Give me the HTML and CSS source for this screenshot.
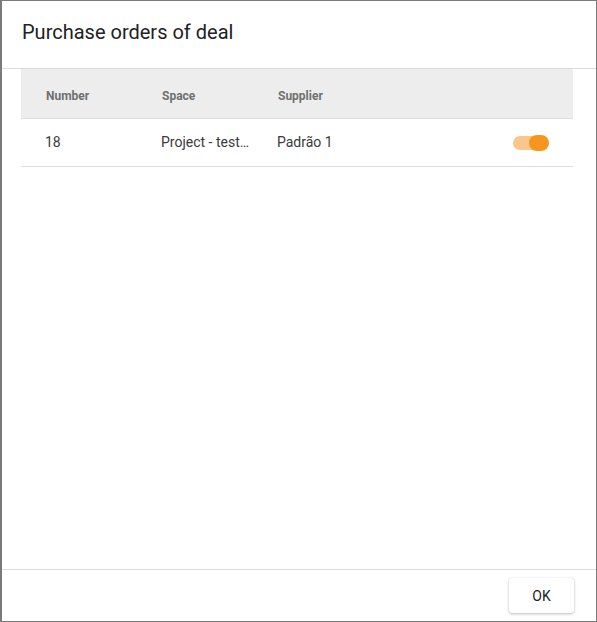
FILE: index.html
```html
<!DOCTYPE html>
<html>
<head>
<meta charset="utf-8">
<link rel="stylesheet" href="styles.css">
</head>
<body>
<div class="dialog">
  <div class="dialog-title">Purchase orders of deal</div>
  <div class="dialog-content">
    <table class="orders">
      <thead>
        <tr>
          <th class="col">Number</th>
          <th class="col">Space</th>
          <th class="col">Supplier</th>
          <th class="col-action"></th>
        </tr>
      </thead>
      <tbody>
        <tr>
          <td class="col">18</td>
          <td class="col"><span class="ellipsis">Project - testing</span></td>
          <td class="col">Padrão 1</td>
          <td class="col-action"><span class="toggle"><span class="knob"></span></span></td>
        </tr>
      </tbody>
    </table>
  </div>
  <div class="dialog-actions">
    <button class="btn">OK</button>
  </div>
</div>
</body>
</html>
```

FILE: styles.css
```css
html, body {
  margin: 0;
  padding: 0;
  background: #fff;
}
body {
  font-family: Roboto, "Liberation Sans", sans-serif;
}
.dialog {
  box-sizing: border-box;
  width: 597px;
  height: 622px;
  border: 1px solid #7a7a7a;
  border-left-width: 2px;
  display: flex;
  flex-direction: column;
  background: #fff;
}
.dialog-title {
  box-sizing: border-box;
  height: 68px;
  padding: 19px 0 0 20px;
  font-size: 20px;
  color: #222;
  border-bottom: 1px solid #dcdcdc;
  line-height: 24px;
}
.dialog-content {
  flex: 1;
  padding: 0 23px 0 19px;
}
.orders {
  width: 100%;
  border-collapse: collapse;
  table-layout: fixed;
}
.orders th {
  height: 49px;
  box-sizing: border-box;
  background: #ededed;
  border-bottom: 1px solid #dedede;
  text-align: left;
  font-size: 12px;
  font-weight: 700;
  color: #707070;
  padding: 5px 0 0 25px;
}
.orders td {
  height: 48px;
  box-sizing: border-box;
  border-bottom: 1px solid #dedede;
  font-size: 14px;
  color: #3a3a3a;
  padding: 0 0 0 24px;
  white-space: nowrap;
}
.col {
  width: 116px;
}
.col-action {
  text-align: right;
}
.orders td.col-action {
  padding-right: 26px;
  text-align: right;
}
.ellipsis {
  display: block;
  overflow: hidden;
  text-overflow: ellipsis;
  white-space: nowrap;
  max-width: 89px;
}
.toggle {
  display: inline-block;
  position: relative;
  width: 34px;
  height: 14px;
  border-radius: 7px;
  background: #fbc689;
  vertical-align: middle;
}
.knob {
  position: absolute;
  right: -2px;
  top: -1px;
  width: 20px;
  height: 16px;
  border-radius: 8px;
  background: #f7961e;
}
.dialog-actions {
  box-sizing: border-box;
  height: 52px;
  border-top: 1px solid #dcdcdc;
  display: flex;
  justify-content: flex-end;
  align-items: flex-start;
  padding: 8px 22px 0 0;
}
.btn {
  width: 65px;
  height: 35px;
  border: none;
  border-radius: 3px;
  background: #fff;
  box-shadow: 0 1px 3px rgba(0,0,0,0.25), 0 0 1px rgba(0,0,0,0.12);
  font-family: Roboto, "Liberation Sans", sans-serif;
  font-size: 14px;
  font-weight: 400;
  color: #222;
  cursor: pointer;
}
```
